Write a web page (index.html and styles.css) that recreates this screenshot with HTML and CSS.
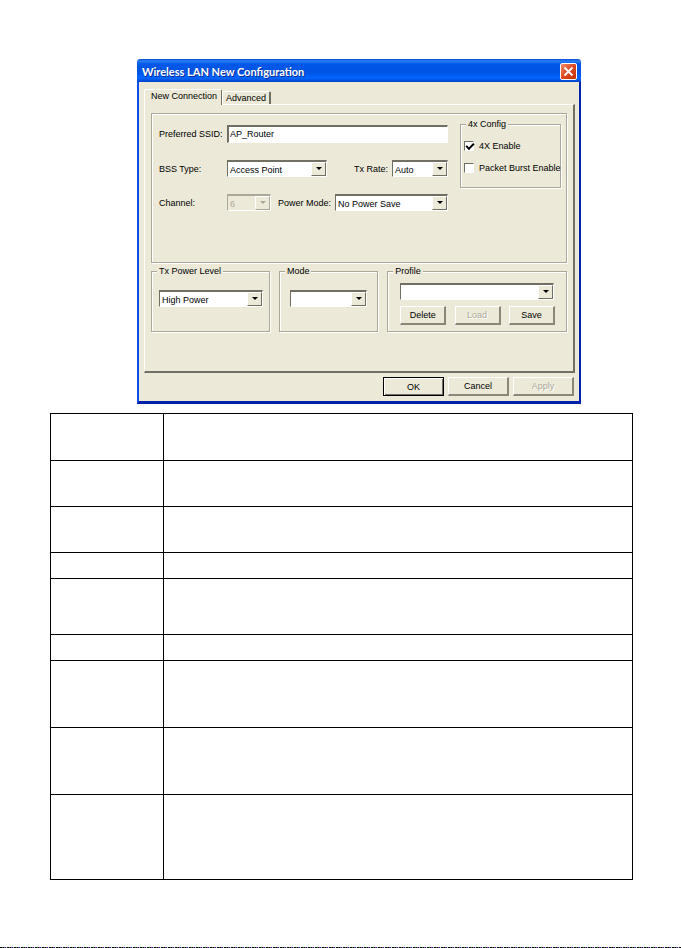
FILE: index.html
```
<!DOCTYPE html>
<html lang="en">

<head>
    <meta charset="utf-8">
    <title>Wireless LAN New Configuration</title>
    <link rel="stylesheet" href="styles.css">
</head>

<body>
    <main class="page">
        <form class="dialog">
            <div class="title-bar">
                <h1>Wireless LAN New Configuration</h1>
                <button type="button" class="close" aria-label="Close">
                    <svg viewBox="0 0 15 15" width="15" height="15">
                        <path d="M3.5 3.5L11.5 11.5M11.5 3.5L3.5 11.5" stroke="#fff" stroke-width="1.8" fill="none" />
                    </svg>
                </button>
            </div>

            <div class="dialog-body">
                <div class="tabs" role="tablist">
                    <button type="button" class="tab active" role="tab" aria-selected="true">New Connection</button>
                    <button type="button" class="tab" role="tab" aria-selected="false">Advanced</button>
                </div>

                <div class="panel" role="tabpanel">
                    <div class="connection">
                        <div class="fields">
                            <div class="row">
                                <label class="name" for="ssid">Preferred SSID:</label>
                                <input type="text" class="text" id="ssid" value="AP_Router">
                            </div>
                            <div class="row">
                                <label class="name" for="bss">BSS Type:</label>
                                <span class="combo bss">
                                    <select id="bss">
                                        <option>Access Point</option>
                                    </select>
                                </span>
                                <label class="second" for="rate">Tx Rate:</label>
                                <span class="combo rate">
                                    <select id="rate">
                                        <option>Auto</option>
                                    </select>
                                </span>
                            </div>
                            <div class="row">
                                <label class="name" for="channel">Channel:</label>
                                <span class="combo channel disabled">
                                    <select id="channel" disabled>
                                        <option>6</option>
                                    </select>
                                </span>
                                <label class="second" for="power-mode">Power Mode:</label>
                                <span class="combo power-mode">
                                    <select id="power-mode">
                                        <option>No Power Save</option>
                                    </select>
                                </span>
                            </div>
                        </div>

                        <fieldset class="config-4x">
                            <legend>4x Config</legend>
                            <label class="check"><input type="checkbox" checked>4X Enable</label>
                            <label class="check"><input type="checkbox">Packet Burst Enable</label>
                        </fieldset>
                    </div>

                    <div class="groups">
                        <fieldset class="power-level">
                            <legend>Tx Power Level</legend>
                            <span class="combo">
                                <select aria-label="Tx Power Level">
                                    <option>High Power</option>
                                </select>
                            </span>
                        </fieldset>
                        <fieldset class="mode">
                            <legend>Mode</legend>
                            <span class="combo">
                                <select aria-label="Mode">
                                    <option></option>
                                </select>
                            </span>
                        </fieldset>
                        <fieldset class="profile">
                            <legend>Profile</legend>
                            <span class="combo">
                                <select aria-label="Profile">
                                    <option></option>
                                </select>
                            </span>
                            <div class="profile-buttons">
                                <button type="button" class="btn">Delete</button>
                                <button type="button" class="btn" disabled>Load</button>
                                <button type="button" class="btn">Save</button>
                            </div>
                        </fieldset>
                    </div>
                </div>

                <div class="dialog-buttons">
                    <button type="button" class="btn default">OK</button>
                    <button type="button" class="btn">Cancel</button>
                    <button type="button" class="btn" disabled>Apply</button>
                </div>
            </div>
        </form>

        <table class="description">
            <tbody>
                <tr class="lines-2"><td></td><td></td></tr>
                <tr class="lines-2"><td></td><td></td></tr>
                <tr class="lines-2"><td></td><td></td></tr>
                <tr class="lines-1"><td></td><td></td></tr>
                <tr class="lines-3"><td></td><td></td></tr>
                <tr class="lines-1"><td></td><td></td></tr>
                <tr class="lines-4"><td></td><td></td></tr>
                <tr class="lines-4"><td></td><td></td></tr>
                <tr class="lines-5"><td></td><td></td></tr>
            </tbody>
        </table>
    </main>
    <div class="page-edge"></div>
</body>

</html>
```
FILE: styles.css
```
* {
    box-sizing: border-box;
}

body {
    margin: 0;
    min-height: 100vh;
    display: flex;
    flex-direction: column;
    background-color: #fff;
    color: #000;
    font-family: "Liberation Sans", Arial, sans-serif;
    font-size: 9px;
    line-height: 12px;
}

button,
input,
select {
    font: inherit;
    color: inherit;
    margin: 0;
}

.page {
    flex: 1;
    padding: 59px 48px 0 50px;
}

/* dialog window */
.dialog {
    margin: 0 52px 9px 87px;
    border: 2px solid #0a4fe8;
    border-top: none;
    border-right-color: #0022a8;
    border-bottom: 3px solid #0022a8;
    border-radius: 4px 4px 0 0;
    background-color: #ece9d8;
}

.title-bar {
    display: flex;
    align-items: center;
    justify-content: space-between;
    height: 23px;
    margin: 0 -2px;
    padding: 2px 4px 0 5px;
    border-radius: 4px 4px 0 0;
    background: linear-gradient(#0848c8 0, #2a80fa 2px, #0058e8 5px, #0054e3 13px, #0066ff 19px, #0040c8 23px);
}

.title-bar h1 {
    margin: 0;
    color: #fff;
    font-family: Lato, "Trebuchet MS", sans-serif;
    font-size: 11px;
    font-weight: bold;
    text-shadow: 1px 1px 0 #0a2f9c;
}

.close {
    width: 17px;
    height: 17px;
    padding: 0;
    border: 1px solid #fff;
    border-radius: 2px;
    background: linear-gradient(135deg, #f08c6c, #dc4820 50%, #c03408);
}

.close svg {
    display: block;
}

.dialog-body {
    padding: 7px 4px 5px 5px;
}

/* tabs */
.tabs {
    display: flex;
    align-items: flex-end;
}

.tab {
    height: 13px;
    padding: 0 3px;
    border: 1px solid #fff;
    border-right: 2px solid #716f64;
    border-bottom: none;
    border-radius: 2px 2px 0 0;
    background-color: #ece9d8;
    line-height: 12px;
    white-space: nowrap;
}

.tab.active {
    height: 16px;
    padding: 0 4px 3px 6px;
    border-right-width: 1px;
    margin-bottom: -1px;
    z-index: 1;
}

.panel {
    padding: 8px 6px 39px;
    border: 1px solid #fff;
    border-right: 2px solid #716f64;
    border-bottom: 2px solid #716f64;
}

/* grouped boxes */
.connection,
fieldset {
    border: 1px solid #aca899;
    box-shadow: 1px 1px 0 #fff, inset 1px 1px 0 #fff;
}

fieldset {
    min-width: 0;
    margin: 0;
    padding: 0;
}

legend {
    margin-left: 5px;
    padding: 0 2px;
    background-color: #ece9d8;
}

.connection {
    display: flex;
    gap: 12px;
    padding: 4px 5px 51px 7px;
}

.fields {
    flex: 1;
    display: flex;
    flex-direction: column;
    gap: 17px;
    padding-top: 7px;
}

.row {
    display: flex;
    align-items: center;
}

.name {
    width: 68px;
    white-space: nowrap;
}

.second {
    margin-left: auto;
    padding-right: 4px;
    white-space: nowrap;
}

.text {
    flex: 1;
    min-width: 0;
    height: 18px;
    padding: 0 1px 2px;
    border: 1px solid #fff;
    border-top: 2px solid #716f64;
    border-left: 2px solid #716f64;
    background-color: #fff;
}

/* drop-downs */
.combo {
    position: relative;
    display: block;
}

.combo select {
    display: block;
    width: 100%;
    height: 17px;
    padding: 1px 14px 0 2px;
    border: 1px solid #fff;
    border-top: 2px solid #716f64;
    border-left: 1px solid #716f64;
    border-radius: 0;
    background-color: #fff;
    appearance: none;
}

.combo::before {
    content: "";
    position: absolute;
    top: 2px;
    right: 1px;
    bottom: 1px;
    width: 13px;
    border: 1px solid #fff;
    border-right-color: #716f64;
    border-bottom-color: #716f64;
    background-color: #ece9d8;
    pointer-events: none;
}

.combo::after {
    content: "";
    position: absolute;
    top: 7px;
    right: 5px;
    border: 3px solid transparent;
    border-top-color: #000;
    border-bottom: none;
    pointer-events: none;
}

.combo.disabled select {
    border-top-color: #aca899;
    border-left-color: #aca899;
    background-color: #ece9d8;
    color: #aca899;
    opacity: 1;
}

.combo.disabled::before {
    border-right-color: #aca899;
    border-bottom-color: #aca899;
}

.combo.disabled::after {
    border-top-color: #aca899;
}

.bss {
    width: 100px;
}

.rate {
    width: 56px;
}

.channel {
    width: 44px;
}

.power-mode {
    width: 113px;
}

/* 4x config */
.config-4x {
    width: 101px;
    height: 70px;
}

.check {
    display: flex;
    align-items: center;
    gap: 5px;
    height: 12px;
    margin: 10px 0 0 3px;
    white-space: nowrap;
}

.check input {
    flex: none;
    width: 10px;
    height: 10px;
    border: 1px solid #fff;
    border-top-color: #716f64;
    border-left-color: #716f64;
    background-color: #fff;
    appearance: none;
}

.check input:checked::before {
    content: "";
    display: block;
    width: 6px;
    height: 3px;
    margin: 1px;
    border: solid #000;
    border-width: 0 0 2px 2px;
    transform: rotate(-45deg);
}

/* lower groups */
.groups {
    display: flex;
    gap: 9px;
    margin-top: 2px;
}

.groups fieldset {
    height: 67px;
}

.power-level {
    flex: 119;
}

.power-level .combo {
    margin: 13px 6px 0 7px;
}

.mode {
    flex: 99;
}

.mode .combo {
    margin: 13px 10px 0;
}

.profile {
    flex: 181;
}

.profile .combo {
    margin: 6px 12px 0;
}

.profile-buttons {
    display: flex;
    justify-content: space-between;
    margin: 6px 11px 0 12px;
}

/* buttons */
.btn {
    width: 61px;
    height: 19px;
    padding: 0;
    border: 1px solid #fff;
    border-right: 2px solid #8a8778;
    border-bottom: 2px solid #8a8778;
    background-color: #ece9d8;
}

.btn:disabled {
    color: #aca899;
    text-shadow: 1px 1px 0 #fff;
}

.btn.default {
    border: 1px solid #000;
    box-shadow: inset 1px 1px 0 #fff, inset -1px -1px 0 #716f64;
}

.profile .btn {
    width: 46px;
}

.dialog-buttons {
    display: flex;
    justify-content: flex-end;
    gap: 4px;
    margin: 4px 1px 0 0;
}

/* description table */
.description {
    width: 100%;
    border-collapse: collapse;
    table-layout: fixed;
}

.description td {
    padding: 0;
    border: 1px solid #000;
}

.description td:first-child {
    width: 113px;
}

.lines-1 {
    height: 26px;
}

.lines-2 {
    height: 46px;
}

.lines-2:first-child {
    height: 47px;
}

.lines-3 {
    height: 56px;
}

.lines-4 {
    height: 67px;
}

.lines-5 {
    height: 85px;
}

.page-edge {
    height: 1px;
    background: repeating-linear-gradient(90deg, #000 0 2px, #3a7a3a 2px 3px, #000 3px 4px, #a04890 4px 5px, #2020c0 5px 6px, #c8e0b0 6px 7px);
}
```
